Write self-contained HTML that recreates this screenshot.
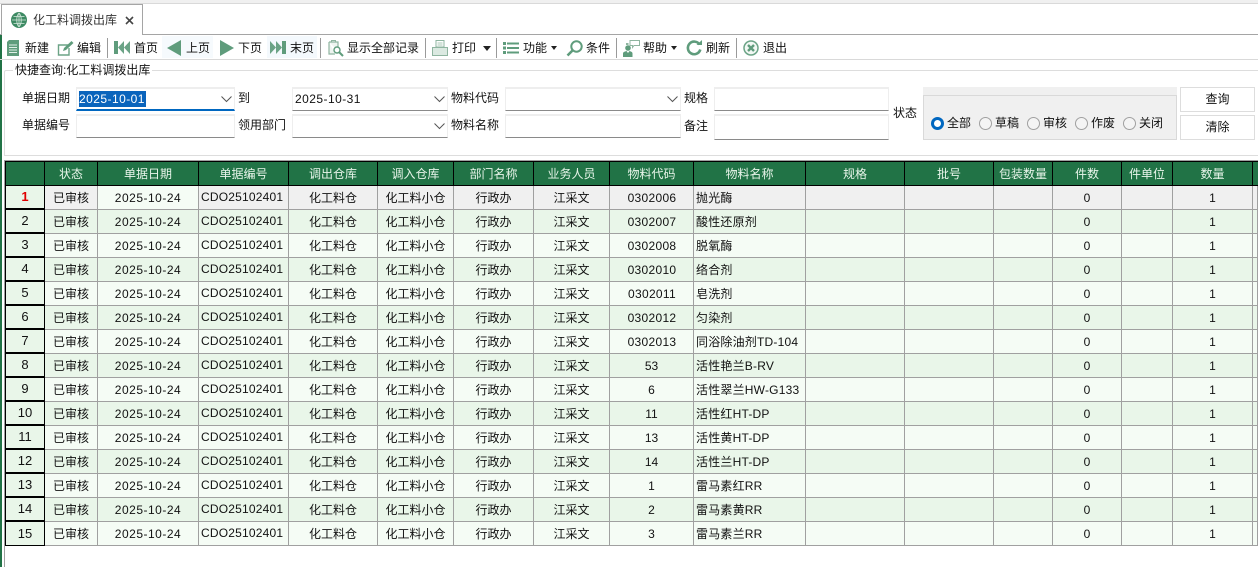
<!DOCTYPE html>
<html><head><meta charset="utf-8"><style>
html,body{margin:0;padding:0;background:#fff}
body{position:relative;width:1258px;height:567px;overflow:hidden;font:12px/16px "Liberation Sans","Noto Sans CJK SC",sans-serif;color:#111}
.a{position:absolute}
.t{position:absolute;white-space:nowrap;line-height:16px}
.sep{position:absolute;top:38px;width:1px;height:20px;background:#9a9a9a}
.in{position:absolute;box-sizing:border-box;background:#fff;border:1px solid #eee;border-bottom:1px solid #8a8a8a;border-top:2px solid #eee}
.btn{position:absolute;left:1180px;width:75px;height:25px;box-sizing:border-box;border:1px solid #ddd;text-align:center;line-height:23px;background:#fff}
.r{position:absolute;top:116.5px;width:11px;height:11px;border:1px solid #a0a0a0;border-radius:50%;background:#f4f4f4}
svg{position:absolute;overflow:visible}
#g{position:absolute;left:5px;top:161px;width:1253px;overflow:hidden}
table{border-collapse:separate;border-spacing:0;table-layout:fixed;width:1253px}
th{height:25px;box-sizing:border-box;padding:0;font-weight:normal;background:#217346;color:#e8f5ea;border-top:1px solid #000;border-right:1px solid #000;border-bottom:1px solid #000;line-height:22px}
td{height:24px;box-sizing:border-box;padding:1px 0 0;border-right:1px solid #a0a0a0;border-bottom:1px solid #a0a0a0;text-align:center;overflow:hidden;white-space:nowrap;line-height:22px}
tr.o td{background:#f5fcf5}
tr.e td{background:#e9f6e9}
tr.s td{background:#f0f0f0}
tr.s td.c{background:#f5fcf5}
td.h,tr.s td.h,tr.o td.h,tr.e td.h{padding:0;background:#e9f6e9;border-left:1px solid #000;border-right:1px solid #000;border-bottom:2px solid #000;line-height:22px;font-size:13px}
tr:last-child td.h{border-bottom:1px solid #000}
th:first-child{border-left:1px solid #000}
td.d{letter-spacing:.5px}
td.n{letter-spacing:.2px;text-align:left;padding:0 0 0 2px;line-height:23px;vertical-align:top}
td.m{text-align:left;padding-left:2px;letter-spacing:.2px}
td.k{letter-spacing:.3px;padding-left:1px}
</style></head><body>
<div class="a" style="left:0;top:0;width:1258px;height:3px;background:#f0f0f0"></div>
<div class="a" style="left:0;top:3px;width:1258px;height:1px;background:#d9d9d9"></div>
<div class="a" style="left:0;top:35px;width:2px;height:532px;background:#217346"></div>
<div class="a" style="left:1px;top:4px;width:142px;height:31px;box-sizing:border-box;border:1px solid #a5a5a5;border-bottom:0;background:#fff"></div>
<div class="a" style="left:143px;top:34px;width:1115px;height:1px;background:#a5a5a5"></div>
<div class="a" style="left:0;top:34px;width:1px;height:1px;background:#a5a5a5"></div>
<svg style="left:11px;top:12px" width="16" height="16" viewBox="0 0 16 16"><circle cx="8" cy="8" r="8" fill="#3d8a63"/><path d="M8 1V15M1 8H15M2.500 4.500H13.500M2.500 11.500H13.500" stroke="#d5e8dd" stroke-width=".8" fill="none"/><path d="M8 1C5 4 5 12 8 15M8 1C11 4 11 12 8 15" stroke="#d5e8dd" stroke-width=".8" fill="none"/></svg>
<div class="t" style="left:33px;top:12px;color:#333">化工料调拨出库</div>
<svg style="left:125px;top:16px" width="9" height="9" viewBox="0 0 9 9"><path d="M1 1L8 8M8 1L1 8" stroke="#444" stroke-width="1.600"/></svg>

<!-- toolbar -->
<div class="a" style="left:162px;top:36px;width:51px;height:22px;background:#f6fafd"></div>
<div class="a" style="left:267px;top:36px;width:50px;height:22px;background:#f4f9fd"></div>
<div class="a" style="left:0;top:59px;width:1258px;height:1px;background:#d9d9d9"></div>
<svg style="left:7px;top:40px" width="12" height="16" viewBox="0 0 12 16"><path d="M2 0H12V16H0V2Z" fill="#5f9c7c"/><path d="M2 5H10M2 7.500H10M2 10H10M2 12.500H10" stroke="#dfeee6" stroke-width="1"/></svg>
<div class="t" style="left:25px;top:40px">新建</div>
<svg style="left:57px;top:40px" width="17" height="16" viewBox="0 0 17 16"><path d="M11 5H1.500V15H12V8" fill="none" stroke="#6ba386" stroke-width="1.400"/><path d="M6 11L7 8L14.500 1L16.500 3L9 10Z" fill="#5f9c7c"/></svg>
<div class="t" style="left:77px;top:40px">编辑</div>
<div class="sep" style="left:107px"></div>
<svg style="left:114px;top:40px" width="16" height="14" viewBox="0 0 16 14"><path d="M0 1H4V14H0Z" fill="#5f9c7c"/><path d="M10 1V14L4 7.500ZM16 1V14L10 7.500Z" fill="#6ba386"/></svg>
<div class="t" style="left:134px;top:40px">首页</div>
<svg style="left:167px;top:40px" width="15" height="16" viewBox="0 0 15 16"><path d="M14 0V16L0 8Z" fill="#5f9c7c"/></svg>
<div class="t" style="left:186px;top:40px">上页</div>
<svg style="left:219px;top:40px" width="15" height="16" viewBox="0 0 15 16"><path d="M1 0V16L15 8Z" fill="#5f9c7c"/></svg>
<div class="t" style="left:238px;top:40px">下页</div>
<svg style="left:270px;top:41px" width="16" height="14" viewBox="0 0 16 14"><path d="M0 0V13L6 6.500ZM6 0V13L12 6.500Z" fill="#6ba386"/><path d="M12 0H16V13H12Z" fill="#5f9c7c"/></svg>
<div class="t" style="left:290px;top:40px">末页</div>
<div class="sep" style="left:320px"></div>
<svg style="left:328px;top:39px" width="16" height="18" viewBox="0 0 16 18"><path d="M1 3H10V12M1 3V15H7" fill="#eef4f0" stroke="#8fb5a0" stroke-width="1.200"/><path d="M3.500 3V1.500H7.500V3" fill="none" stroke="#8fb5a0"/><circle cx="9" cy="11" r="3" fill="#fff" stroke="#5f9c7c" stroke-width="1.400"/><path d="M11 13L15 17" stroke="#5f9c7c" stroke-width="2"/></svg>
<div class="t" style="left:347px;top:40px">显示全部记录</div>
<div class="sep" style="left:425px"></div>
<svg style="left:432px;top:40px" width="16" height="16" viewBox="0 0 16 16"><path d="M4 .5H12V7H4Z" fill="#fff" stroke="#8fb5a0"/><path d="M5.500 3H10.500M5.500 5H10.500" stroke="#a8c7b5"/><path d="M.5 7.500H15.500V15.500H.5Z" fill="#dbe9e1" stroke="#8fb5a0"/></svg>
<div class="t" style="left:452px;top:40px">打印</div>
<svg style="left:483px;top:46px" width="8" height="5" viewBox="0 0 8 5"><path d="M0 0H8L4 5Z" fill="#222"/></svg>
<div class="sep" style="left:496px"></div>
<svg style="left:503px;top:42px" width="16" height="12" viewBox="0 0 16 12"><path d="M0 0H3V3H0ZM0 4.500H3V7.500H0ZM0 9H3V12H0Z" fill="#5f9c7c"/><path d="M4 1.500H16M4 6H16M4 10.500H16" stroke="#5f9c7c" stroke-width="2"/></svg>
<div class="t" style="left:523px;top:40px">功能</div>
<svg style="left:551px;top:46px" width="6" height="4" viewBox="0 0 6 4"><path d="M0 0H6L3 4Z" fill="#222"/></svg>
<svg style="left:566px;top:40px" width="17" height="17" viewBox="0 0 17 17"><circle cx="10.500" cy="6.500" r="5.200" fill="none" stroke="#5f9c7c" stroke-width="2"/><path d="M6.500 10.500L1.500 15.500" stroke="#5f9c7c" stroke-width="2.600"/></svg>
<div class="t" style="left:586px;top:40px">条件</div>
<div class="sep" style="left:616px"></div>
<svg style="left:623px;top:40px" width="17" height="17" viewBox="0 0 17 17"><circle cx="5" cy="8" r="2.800" fill="#5f9c7c"/><path d="M0 17V13.500C0 12 2 11.500 3.500 11L5 13L6.500 11C8 11.500 9.500 12 9.500 13.500V17Z" fill="#5f9c7c"/><path d="M7 .5H16.500V5.500H11L9.500 7.500V5.500H7Z" fill="#fff" stroke="#8fb5a0"/><path d="M3 3H5.500V5H3Z" fill="#8fb5a0"/></svg>
<div class="t" style="left:643px;top:40px">帮助</div>
<svg style="left:671px;top:46px" width="6" height="4" viewBox="0 0 6 4"><path d="M0 0H6L3 4Z" fill="#222"/></svg>
<svg style="left:686px;top:40px" width="16" height="16" viewBox="0 0 16 16"><path d="M13.500 4.500A6.300 6.300 0 1 0 14.300 9.500" fill="none" stroke="#5f9c7c" stroke-width="2.600"/><path d="M10.500 5H16V0Z" fill="#5f9c7c"/></svg>
<div class="t" style="left:706px;top:40px">刷新</div>
<div class="sep" style="left:736px"></div>
<svg style="left:743px;top:40px" width="16" height="16" viewBox="0 0 16 16"><circle cx="8" cy="8" r="7" fill="#f2f8f4" stroke="#6ba386" stroke-width="1.500"/><path d="M5 5L11 11M11 5L5 11" stroke="#5f9c7c" stroke-width="2.400"/></svg>
<div class="t" style="left:763px;top:40px">退出</div>

<!-- group box -->
<div class="a" style="left:4px;top:70px;width:1254px;height:86px;box-sizing:border-box;border:1px solid #ddd;border-right:0;border-radius:2px 0 0 0"></div>
<div class="t" style="left:13px;top:62px;background:#fff;padding:0 2px">快捷查询:化工料调拨出库</div>

<div class="t" style="left:22px;top:90px">单据日期</div>
<div class="t" style="left:22px;top:117px">单据编号</div>
<div class="t" style="left:238px;top:90px">到</div>
<div class="t" style="left:238px;top:117px">领用部门</div>
<div class="t" style="left:451px;top:90px">物料代码</div>
<div class="t" style="left:451px;top:117px">物料名称</div>
<div class="t" style="left:684px;top:90px">规格</div>
<div class="t" style="left:684px;top:118px">备注</div>
<div class="t" style="left:893px;top:105px">状态</div>

<div class="in" style="left:76px;top:87px;width:159px;height:24px;border-bottom:2px solid #0067c0"></div>
<div class="t" style="left:79px;top:91px;height:16px;width:67px;background:#0a64bc;color:#fff;letter-spacing:.45px">2025-10-01</div>
<div class="in" style="left:76px;top:114px;width:159px;height:24px"></div>
<div class="in" style="left:292px;top:87px;width:156px;height:24px"></div>
<div class="t" style="left:295px;top:91px;letter-spacing:.45px">2025-10-31</div>
<div class="in" style="left:292px;top:114px;width:156px;height:24px"></div>
<div class="in" style="left:505px;top:87px;width:176px;height:24px"></div>
<div class="in" style="left:505px;top:114px;width:176px;height:24px"></div>
<div class="in" style="left:714px;top:87px;width:175px;height:24px"></div>
<div class="in" style="left:714px;top:114px;width:175px;height:26px"></div>
<svg style="left:221px;top:96px" width="11" height="6" viewBox="0 0 11 6"><path d="M.5 .5L5.500 5.500L10.500 .5" fill="none" stroke="#555"/></svg>
<svg style="left:434px;top:96px" width="11" height="6" viewBox="0 0 11 6"><path d="M.5 .5L5.500 5.500L10.500 .5" fill="none" stroke="#555"/></svg>
<svg style="left:434px;top:123px" width="11" height="6" viewBox="0 0 11 6"><path d="M.5 .5L5.500 5.500L10.500 .5" fill="none" stroke="#555"/></svg>
<svg style="left:667px;top:96px" width="11" height="6" viewBox="0 0 11 6"><path d="M.5 .5L5.500 5.500L10.500 .5" fill="none" stroke="#555"/></svg>

<div class="a" style="left:923px;top:87px;width:254px;height:53px;background:#f0f0f0"></div>
<div class="a" style="left:923px;top:95px;width:254px;height:45px;box-sizing:border-box;border:1px solid #d9d9d9"></div>
<div class="r" style="left:931px;width:7px;height:7px;top:116.500px;border:3px solid #0067c0;background:#fff"></div>
<div class="r" style="left:979px"></div>
<div class="r" style="left:1027px"></div>
<div class="r" style="left:1075px"></div>
<div class="r" style="left:1123px"></div>
<div class="t" style="left:947px;top:115px">全部</div>
<div class="t" style="left:995px;top:115px">草稿</div>
<div class="t" style="left:1043px;top:115px">审核</div>
<div class="t" style="left:1091px;top:115px">作废</div>
<div class="t" style="left:1139px;top:115px">关闭</div>
<div class="btn" style="top:87px">查询</div>
<div class="btn" style="top:115px">清除</div>

<!-- grid -->
<div class="a" style="left:4px;top:160px;width:1254px;height:1px;background:#a0a0a0"></div>
<div class="a" style="left:4px;top:160px;width:1px;height:407px;background:#a0a0a0"></div>
<div id="g"><table>
<colgroup><col style="width:40px"><col style="width:53px"><col style="width:101px"><col style="width:90px"><col style="width:89px"><col style="width:76px"><col style="width:80px"><col style="width:76px"><col style="width:84px"><col style="width:112px"><col style="width:99px"><col style="width:89px"><col style="width:59px"><col style="width:69px"><col style="width:51px"><col style="width:80px"><col style="width:5px"></colgroup>
<tr><th></th><th>状态</th><th>单据日期</th><th>单据编号</th><th>调出仓库</th><th>调入仓库</th><th>部门名称</th><th>业务人员</th><th>物料代码</th><th>物料名称</th><th>规格</th><th>批号</th><th>包装数量</th><th>件数</th><th>件单位</th><th>数量</th><th style="border-right:0"></th></tr>
<tr class="s"><td class="h" style="color:#e00000;font-weight:bold">1</td><td>已审核</td><td class="c d">2025-10-24</td><td class="n">CDO25102401</td><td>化工料仓</td><td>化工料小仓</td><td>行政办</td><td>江采文</td><td class="k">0302006</td><td class="m">抛光酶</td><td></td><td></td><td></td><td>0</td><td></td><td>1</td><td></td></tr>
<tr class="e"><td class="h">2</td><td>已审核</td><td class="d">2025-10-24</td><td class="n">CDO25102401</td><td>化工料仓</td><td>化工料小仓</td><td>行政办</td><td>江采文</td><td class="k">0302007</td><td class="m">酸性还原剂</td><td></td><td></td><td></td><td>0</td><td></td><td>1</td><td></td></tr>
<tr class="o"><td class="h">3</td><td>已审核</td><td class="d">2025-10-24</td><td class="n">CDO25102401</td><td>化工料仓</td><td>化工料小仓</td><td>行政办</td><td>江采文</td><td class="k">0302008</td><td class="m">脱氧酶</td><td></td><td></td><td></td><td>0</td><td></td><td>1</td><td></td></tr>
<tr class="e"><td class="h">4</td><td>已审核</td><td class="d">2025-10-24</td><td class="n">CDO25102401</td><td>化工料仓</td><td>化工料小仓</td><td>行政办</td><td>江采文</td><td class="k">0302010</td><td class="m">络合剂</td><td></td><td></td><td></td><td>0</td><td></td><td>1</td><td></td></tr>
<tr class="o"><td class="h">5</td><td>已审核</td><td class="d">2025-10-24</td><td class="n">CDO25102401</td><td>化工料仓</td><td>化工料小仓</td><td>行政办</td><td>江采文</td><td class="k">0302011</td><td class="m">皂洗剂</td><td></td><td></td><td></td><td>0</td><td></td><td>1</td><td></td></tr>
<tr class="e"><td class="h">6</td><td>已审核</td><td class="d">2025-10-24</td><td class="n">CDO25102401</td><td>化工料仓</td><td>化工料小仓</td><td>行政办</td><td>江采文</td><td class="k">0302012</td><td class="m">匀染剂</td><td></td><td></td><td></td><td>0</td><td></td><td>1</td><td></td></tr>
<tr class="o"><td class="h">7</td><td>已审核</td><td class="d">2025-10-24</td><td class="n">CDO25102401</td><td>化工料仓</td><td>化工料小仓</td><td>行政办</td><td>江采文</td><td class="k">0302013</td><td class="m">同浴除油剂TD-104</td><td></td><td></td><td></td><td>0</td><td></td><td>1</td><td></td></tr>
<tr class="e"><td class="h">8</td><td>已审核</td><td class="d">2025-10-24</td><td class="n">CDO25102401</td><td>化工料仓</td><td>化工料小仓</td><td>行政办</td><td>江采文</td><td>53</td><td class="m">活性艳兰B-RV</td><td></td><td></td><td></td><td>0</td><td></td><td>1</td><td></td></tr>
<tr class="o"><td class="h">9</td><td>已审核</td><td class="d">2025-10-24</td><td class="n">CDO25102401</td><td>化工料仓</td><td>化工料小仓</td><td>行政办</td><td>江采文</td><td>6</td><td class="m">活性翠兰HW-G133</td><td></td><td></td><td></td><td>0</td><td></td><td>1</td><td></td></tr>
<tr class="e"><td class="h">10</td><td>已审核</td><td class="d">2025-10-24</td><td class="n">CDO25102401</td><td>化工料仓</td><td>化工料小仓</td><td>行政办</td><td>江采文</td><td>11</td><td class="m">活性红HT-DP</td><td></td><td></td><td></td><td>0</td><td></td><td>1</td><td></td></tr>
<tr class="o"><td class="h">11</td><td>已审核</td><td class="d">2025-10-24</td><td class="n">CDO25102401</td><td>化工料仓</td><td>化工料小仓</td><td>行政办</td><td>江采文</td><td>13</td><td class="m">活性黄HT-DP</td><td></td><td></td><td></td><td>0</td><td></td><td>1</td><td></td></tr>
<tr class="e"><td class="h">12</td><td>已审核</td><td class="d">2025-10-24</td><td class="n">CDO25102401</td><td>化工料仓</td><td>化工料小仓</td><td>行政办</td><td>江采文</td><td>14</td><td class="m">活性兰HT-DP</td><td></td><td></td><td></td><td>0</td><td></td><td>1</td><td></td></tr>
<tr class="o"><td class="h">13</td><td>已审核</td><td class="d">2025-10-24</td><td class="n">CDO25102401</td><td>化工料仓</td><td>化工料小仓</td><td>行政办</td><td>江采文</td><td>1</td><td class="m">雷马素红RR</td><td></td><td></td><td></td><td>0</td><td></td><td>1</td><td></td></tr>
<tr class="e"><td class="h">14</td><td>已审核</td><td class="d">2025-10-24</td><td class="n">CDO25102401</td><td>化工料仓</td><td>化工料小仓</td><td>行政办</td><td>江采文</td><td>2</td><td class="m">雷马素黄RR</td><td></td><td></td><td></td><td>0</td><td></td><td>1</td><td></td></tr>
<tr class="o"><td class="h">15</td><td>已审核</td><td class="d">2025-10-24</td><td class="n">CDO25102401</td><td>化工料仓</td><td>化工料小仓</td><td>行政办</td><td>江采文</td><td>3</td><td class="m">雷马素兰RR</td><td></td><td></td><td></td><td>0</td><td></td><td>1</td><td></td></tr>
</table></div>
</body></html>
